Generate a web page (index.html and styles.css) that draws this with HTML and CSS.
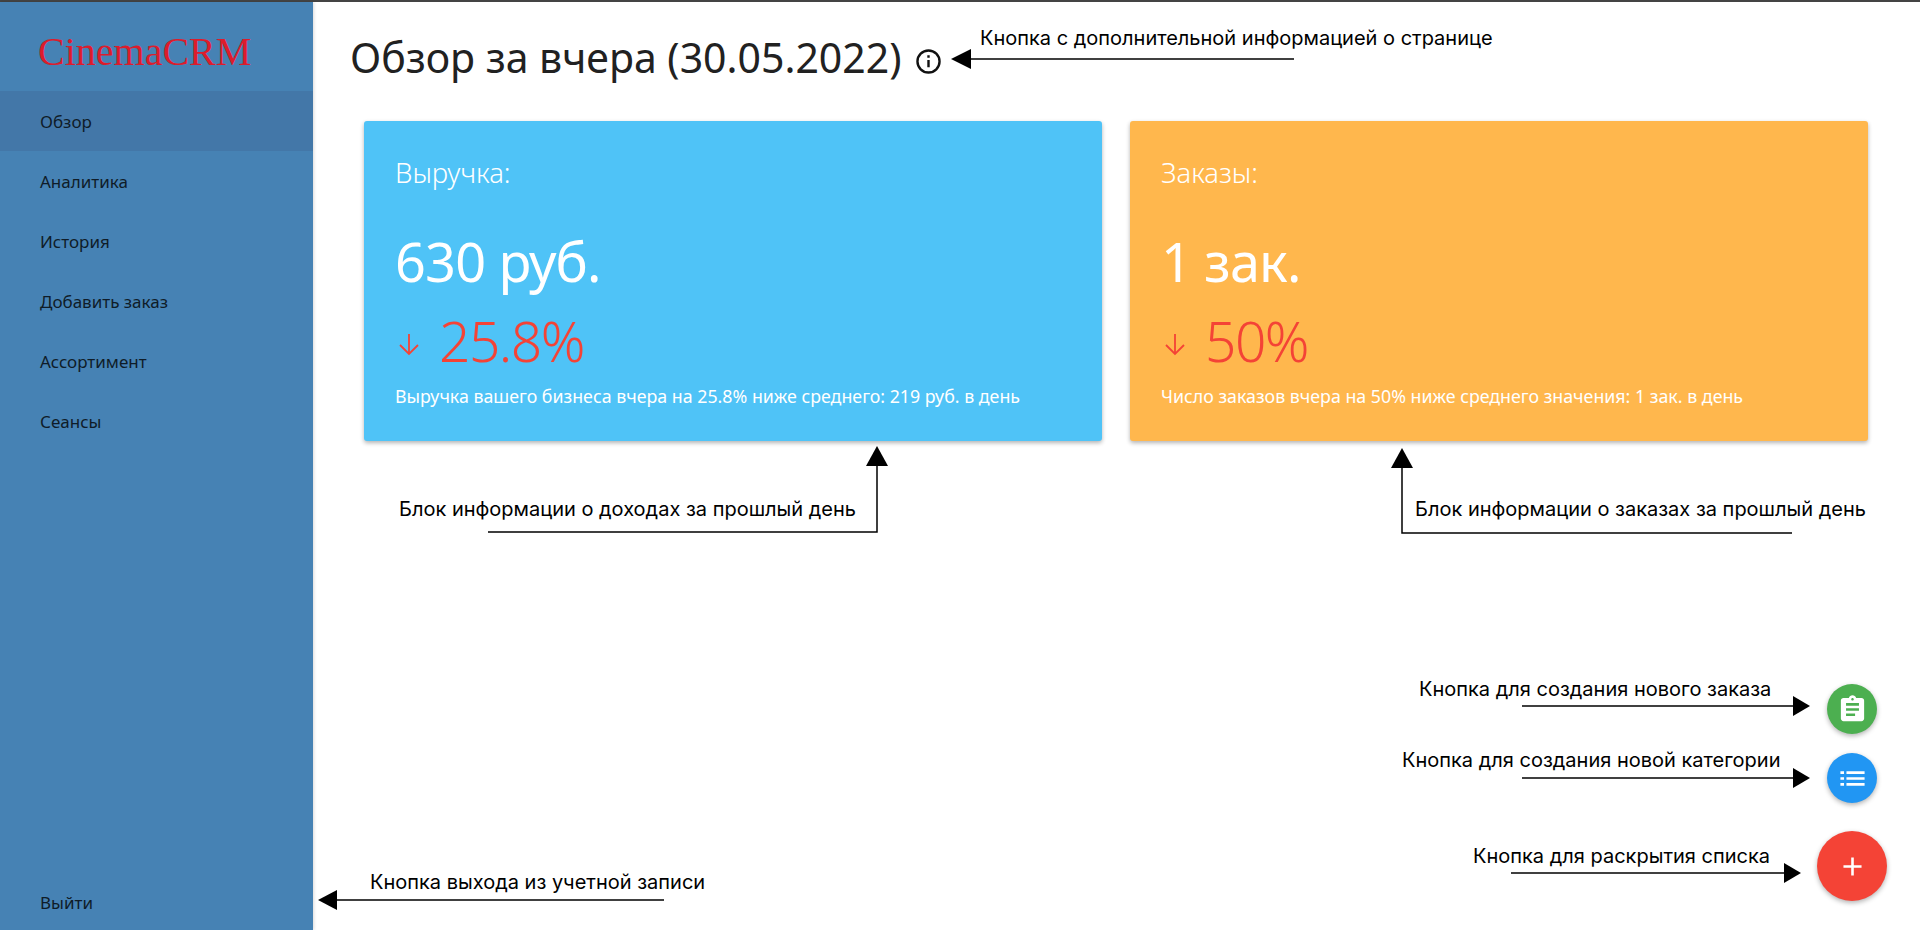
FILE: index.html
```html
<!DOCTYPE html>
<html lang="ru">
<head>
<meta charset="utf-8">
<title>CinemaCRM</title>
<link rel="stylesheet" href="styles.css">
</head>
<body>
<div class="app">
  <aside class="sidebar">
    <div class="logo">CinemaCRM</div>
    <nav class="nav">
      <a class="nav-item active">Обзор</a>
      <a class="nav-item">Аналитика</a>
      <a class="nav-item">История</a>
      <a class="nav-item">Добавить заказ</a>
      <a class="nav-item">Ассортимент</a>
      <a class="nav-item">Сеансы</a>
    </nav>
    <a class="nav-item logout">Выйти</a>
  </aside>
  <main class="main">
    <header class="page-head">
      <h1 class="page-title">Обзор за вчера (30.05.2022)</h1>
      <svg class="info-icon" viewBox="0 0 24 24" fill="none" stroke="currentColor" stroke-width="2.300"><circle cx="12" cy="12" r="10.600"/><path d="M12 10.500v7M12 6v2.300"/></svg>
    </header>
    <section class="cards">
      <article class="card card-blue">
        <div class="card-label">Выручка:</div>
        <div class="card-value">630 руб.</div>
        <div class="card-delta">
          <svg class="delta-arrow" viewBox="0 0 24 24" fill="none" stroke="currentColor" stroke-width="1.800"><path d="M12 2v20M3 13l9 9 9-9"/></svg>
          <span>25.8%</span>
        </div>
        <div class="card-note">Выручка вашего бизнеса вчера на 25.8% ниже среднего: 219 руб. в день</div>
      </article>
      <article class="card card-orange">
        <div class="card-label">Заказы:</div>
        <div class="card-value">1 зак.</div>
        <div class="card-delta">
          <svg class="delta-arrow" viewBox="0 0 24 24" fill="none" stroke="currentColor" stroke-width="1.800"><path d="M12 2v20M3 13l9 9 9-9"/></svg>
          <span>50%</span>
        </div>
        <div class="card-note">Число заказов вчера на 50% ниже среднего значения: 1 зак. в день</div>
      </article>
    </section>
    <div class="fabs">
      <button class="fab fab-green"><svg class="icon-clip" viewBox="0 0 24 24" fill="currentColor"><path d="M19 3h-4.180C14.400 1.840 13.300 1 12 1c-1.300 0-2.400.840-2.820 2H5c-1.100 0-2 .900-2 2v14c0 1.100.900 2 2 2h14c1.100 0 2-.900 2-2V5c0-1.100-.900-2-2-2zm-7 0c.550 0 1 .450 1 1s-.450 1-1 1-1-.450-1-1 .450-1 1-1zm2 14H7v-2h7v2zm3-4H7v-2h10v2zm0-4H7V7h10v2z"/></svg></button>
      <button class="fab fab-blue"><svg class="icon-list" viewBox="0 0 24 24" fill="currentColor"><path d="M2 6h3v2.200H2zM7 6h15v2.200H7zM2 10.900h3v2.200H2zM7 10.900h15v2.200H7zM2 15.800h3v2.200H2zM7 15.800h15v2.200H7z"/></svg></button>
      <button class="fab fab-red"><svg class="icon-plus" viewBox="0 0 24 24" fill="currentColor"><path d="M19 13h-6v6h-2v-6H5v-2h6V5h2v6h6z"/></svg></button>
    </div>
  </main>
</div>

<svg class="arrows" viewBox="0 0 1920 930" fill="none" stroke="#000" stroke-width="1.500">
  <path d="M1294 59H968"/><path d="M951 59l20-10v20z" fill="#000" stroke="none"/>
  <path d="M488 532H877V462"/><path d="M877 446l11 20h-22z" fill="#000" stroke="none"/>
  <path d="M1792 533H1402V464"/><path d="M1402 448l11 20h-22z" fill="#000" stroke="none"/>
  <path d="M1522 706H1795"/><path d="M1810 706l-17-10v20z" fill="#000" stroke="none"/>
  <path d="M1522 778H1795"/><path d="M1810 778l-17-10v20z" fill="#000" stroke="none"/>
  <path d="M1511 873H1786"/><path d="M1801 873l-17-10v20z" fill="#000" stroke="none"/>
  <path d="M664 900H335"/><path d="M318 900l19-10v20z" fill="#000" stroke="none"/>
</svg>
<span class="note note-info">Кнопка с дополнительной информацией о странице</span>
<span class="note note-income">Блок информации о доходах за прошлый день</span>
<span class="note note-orders">Блок информации о заказах за прошлый день</span>
<span class="note note-order">Кнопка для создания нового заказа</span>
<span class="note note-category">Кнопка для создания новой категории</span>
<span class="note note-list">Кнопка для раскрытия списка</span>
<span class="note note-exit">Кнопка выхода из учетной записи</span>
</body>
</html>
```
FILE: styles.css
```css
* { box-sizing: border-box; }
html, body { margin: 0; height: 100%; overflow: hidden; }
body { background: #fff; font-family: "Noto Sans", "Open Sans", sans-serif; color: #212121; position: relative; }

.app { display: flex; height: 930px; border-top: 2px solid #444; }

.sidebar { width: 313px; flex: none; display: flex; flex-direction: column; background: #4682b4; box-shadow: 1px 0 3px rgba(0,0,0,.15); }
.logo { height: 89px; padding: 28px 0 0 38px; font: 40px/44px "Liberation Serif", serif; color: #dc1c2c; }
.nav { display: flex; flex-direction: column; flex: 1; }
.nav-item { height: 60px; display: flex; align-items: center; padding: 1px 0 0 40px; font-size: 17px; color: #0f1c28; }
.nav-item.active { background: #4377a8; }
.logout { padding-top: 5px; }

.main { flex: 1; position: relative; padding: 0 52px 0 37px; }
.page-head { display: flex; align-items: center; height: 119px; }
.page-title { margin: 0 0 9px; font-weight: 400; font-size: 41px; line-height: 58px; color: #212121; }
.info-icon { width: 25px; height: 25px; margin-left: 14px; color: #111; flex: none; }

.cards { display: grid; grid-template-columns: 738px 738px; gap: 28px; padding-left: 14px; }
.card { height: 320px; padding: 36px 31px; border-radius: 3px; color: #fff; box-shadow: 0 2px 4px rgba(0,0,0,.3); font-weight: 300; }
.card-blue { background: #4fc3f7; }
.card-orange { background: #ffb74d; }
.card-label { font-size: 27.500px; line-height: 32px; }
.card-value { margin-top: 37px; font-size: 54px; line-height: 70px; font-weight: 400; letter-spacing: -.8px; }
.card-delta { display: flex; align-items: center; margin-top: 10px; color: #f44336; font-size: 55px; line-height: 70px; letter-spacing: -1.500px; }
.delta-arrow { width: 24px; height: 24px; margin: 6px 18px 0 2px; flex: none; }
.card-note { margin-top: 10px; font-size: 17.800px; line-height: 20px; font-weight: 400; }

.fabs { position: absolute; right: 33px; bottom: 29px; display: flex; flex-direction: column; align-items: center; }
.fab { display: flex; align-items: center; justify-content: center; padding: 0; border: 0; border-radius: 50%; color: #fff; width: 50px; height: 50px; box-shadow: 0 2px 5px rgba(0,0,0,.3); }
.icon-clip { width: 31px; height: 31px; flex: none; }
.icon-list { width: 29px; height: 29px; flex: none; }
.icon-plus { width: 31px; height: 31px; flex: none; }
.fab-green { background: #4caf50; margin-bottom: 19px; }
.fab-blue { background: #2196f3; margin-bottom: 28px; }
.fab-red { background: #f44336; width: 70px; height: 70px; }

.arrows { position: absolute; left: 0; top: 0; width: 1920px; height: 930px; pointer-events: none; }
.note { position: absolute; font-family: Inter, sans-serif; font-size: 20px; line-height: 24px; color: #000; white-space: nowrap; }
.note-info { left: 980px; top: 26px; }
.note-income { left: 399px; top: 497px; }
.note-orders { left: 1415px; top: 497px; }
.note-order { left: 1419px; top: 677px; }
.note-category { left: 1402px; top: 748px; }
.note-list { left: 1473px; top: 844px; }
.note-exit { left: 370px; top: 870px; }
```
